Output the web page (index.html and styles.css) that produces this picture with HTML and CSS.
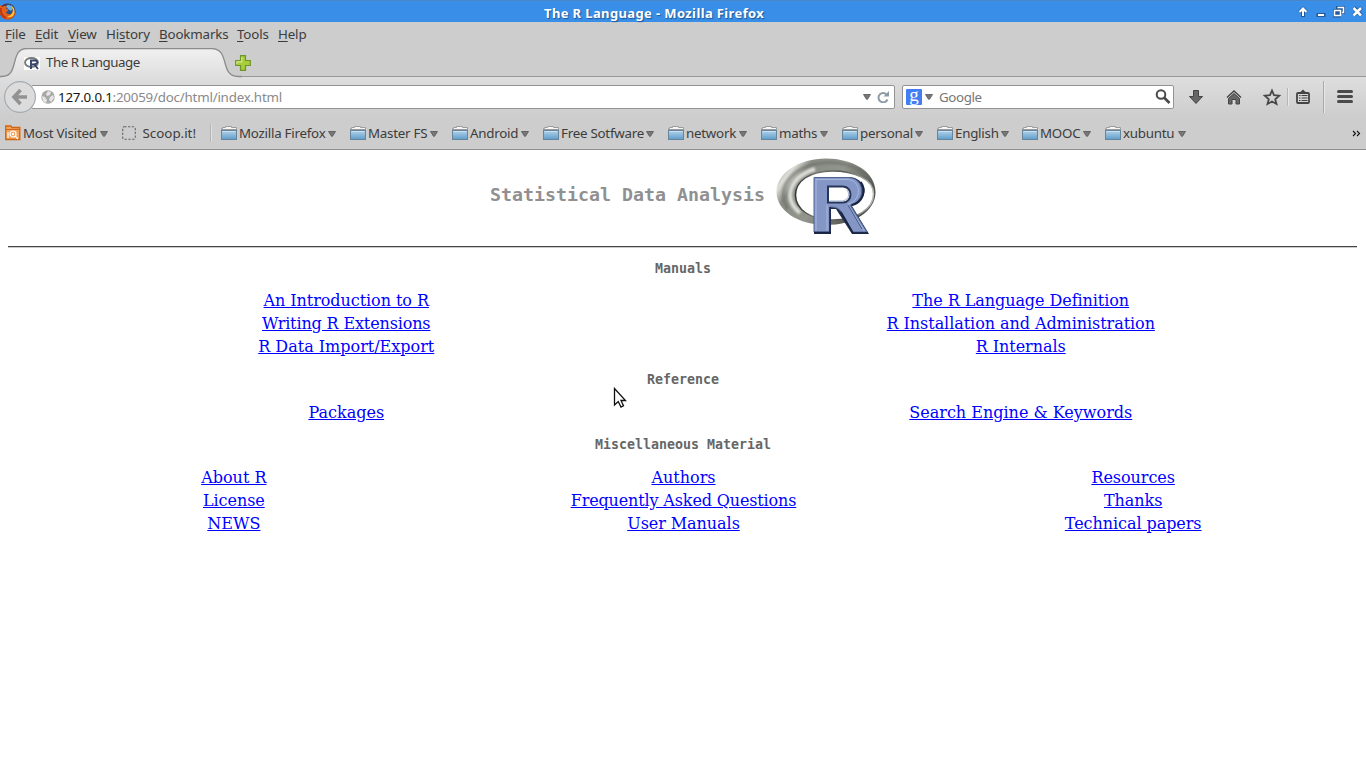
FILE: index.html
```html
<!DOCTYPE html>
<html lang="en">
<head>
<meta charset="utf-8">
<title>The R Language</title>
<link rel="stylesheet" href="styles.css">
</head>
<body>
<svg class="defs" width="0" height="0">
  <defs>
    <linearGradient id="folderFill" x1="0" y1="0" x2="0" y2="1"><stop offset="0" stop-color="#b4d4ea"/><stop offset="1" stop-color="#5e9cca"/></linearGradient>
    <symbol id="folder" viewBox="0 0 16 15">
      <path d="M.5 13.500V2.500H1.500V1.500H4.500V.5H10.500V1.500H15.500V13.500Z" fill="#f6f6f6" stroke="#9a9da0"/>
      <path d="M1 3.500H15" stroke="#999"/>
      <rect x=".5" y="4.500" width="15" height="9" fill="url(#folderFill)" stroke="#66849c"/>
      <path d="M1.500 5.500H14.500" stroke="#c8e0f0"/>
    </symbol>
    <symbol id="arrow" viewBox="0 0 8 6"><path d="M.5 .5H7.500L4.500 5.300H3.500Z" fill="#777" stroke="#555" stroke-width=".8"/></symbol>
    <linearGradient id="ring" x1="0" y1="0" x2="1" y2=".5"><stop offset="0" stop-color="#777a73"/><stop offset=".08" stop-color="#a4a79f"/><stop offset=".19" stop-color="#deded9"/><stop offset=".3" stop-color="#8a8d85"/><stop offset=".6" stop-color="#92958c"/><stop offset="1" stop-color="#4e514c"/></linearGradient>
    <linearGradient id="ringInner" x1="0" y1="0" x2="1" y2="0"><stop offset="0" stop-color="#31332f"/><stop offset=".25" stop-color="#73766f"/><stop offset=".6" stop-color="#555851"/><stop offset="1" stop-color="#b8bab5"/></linearGradient>
    <filter id="soft" x="-10%" y="-10%" width="120%" height="120%"><feGaussianBlur stdDeviation="1.300"/></filter>
    <symbol id="rlogo" viewBox="0 0 100 76">
      <path fill-rule="evenodd" fill="url(#ring)" d="M50 .5C77 .5 99.500 14 99.500 34S77 67 50 67S.5 53 .5 34S23 .5 50 .5ZM56 13C34 13 19.500 23 19.500 37S34 62 57 62S97.500 51 97.500 36S78 13 56 13Z"/>
      <path d="M12 51C-1 33 13 9 46 5C64 3 80 8 89 16" fill="none" stroke="#62655e" stroke-width="3" opacity=".5" filter="url(#soft)"/>
      <path d="M24 55C5 39 16 18 39 11" fill="none" stroke="#f8f8f3" stroke-width="4" opacity=".75" filter="url(#soft)"/>
      <path d="M56 13C34 13 19.500 23 19.500 37S34 62 57 62S97.500 51 97.500 36S78 13 56 13Z" fill="none" stroke="url(#ringInner)" stroke-width="1.500"/>
      <path fill="#202c4e" d="M38 19H72C93 19 93 45 76 48L93 76H76L60 51H55V76H38Z"/>
      <path fill="#8396c6" stroke="#536692" stroke-width="1" d="M38 19.500H72C89 19.500 90 43 76 46C73 47 76 49 78 53L91 74H77L66 55C63 50 60 49 54 49V74H38Z"/>
      <path d="M40 73V21.500H71C86 21.500 86 43 72 46L74 50L88 72.500M51 72.500V46.500" fill="none" stroke="#a9b8dc" stroke-width="1"/>
      <path d="M72 47L86 71" fill="none" stroke="#465883" stroke-width="1"/>
      <path d="M54 49V74.500H38M91.500 75H77L65 54M85 24C92 34 86 43 76 47" fill="none" stroke="#172341" stroke-width="1.500"/>
      <path d="M52 28.500H67C77 29 77 44 67 44.500H52Z" fill="#fff" stroke="#273658" stroke-width="2"/>
      <path d="M53.500 43H67C73 41 74 36 71 32" fill="none" stroke="#a5b2d2" stroke-width="1"/>
    </symbol>
  </defs>
</svg>

<div class="titlebar">
  <svg class="fox" width="17" height="18" viewBox="0 0 17 18">
    <circle cx="7.500" cy="9.500" r="8" fill="#7e2215"/><circle cx="8.500" cy="8.500" r="6.500" fill="#255391"/>
    <path d="M6 4Q10 1 13 6L11 9L8 7Z" fill="#67b3e5"/>
    <path d="M0 3L2 5Q4 3 7 5L6 7Q9 7 8 9L6 10Q7 13 11 12Q14 10 12 5Q18 12 12 16Q5 20 1 14Q-1 10 0 3Z" fill="#e1601c"/>
    <path d="M11 3Q17 8 13 14Q10 16 7 15Q13 13 13 8Z" fill="#f8c839"/>
    <path d="M1 6Q0 13 6 16" fill="none" stroke="#b72d16" stroke-width="1.500"/>
  </svg>
  <span class="title">The R Language - Mozilla Firefox</span>
  <svg class="winbtns" width="66" height="16" viewBox="0 0 66 16">
    <g fill="none" stroke="#245a9b" stroke-width="4" stroke-linecap="square"><path d="M5 11V6M3 7L5 5L7 7M20.500 11H25.500M37 7H41V11.500H37ZM40 4H45V8M57 5L62 10M62 5L57 10"/></g>
    <g fill="none" stroke="#fff" stroke-width="2"><path d="M5 12V5M1.500 8L5 4.500L8.500 8M20 11H26"/><path d="M36.500 6.500H42.500V11.500H36.500Z M39.500 3.500H45.500V8.500H44" stroke-width="1.500"/><path d="M55.500 4L63 11.500M63 4L55.500 11.500" stroke-width="2.500"/></g>
  </svg>
</div>

<div class="menubar">
  <span class="m1"><u>F</u>ile</span><span class="m2"><u>E</u>dit</span><span class="m3"><u>V</u>iew</span><span class="m4">Hi<u>s</u>tory</span><span class="m5"><u>B</u>ookmarks</span><span class="m6"><u>T</u>ools</span><span><u>H</u>elp</span>
</div>

<div class="tabstrip">
  <div class="tab">
    <svg class="tabshape" width="242" height="30" viewBox="0 0 242 30">
      <defs><linearGradient id="tabFill" x1="0" y1="0" x2="0" y2="1"><stop offset="0" stop-color="#f0f0f0"/><stop offset="1" stop-color="#dedede"/></linearGradient></defs>
      <path d="M0 28.500H2C20 28.500 9 .5 27 .5H211C231 .5 219 28.500 238 28.500H242V30H0Z" fill="url(#tabFill)"/>
      <path d="M0 28.500H2C20 28.500 9 .5 27 .5H211C231 .5 219 28.500 238 28.500H242" fill="none" stroke="#8c8c8c" stroke-width="1.300"/>
    </svg>
    <svg class="tabicon" width="16" height="13" viewBox="0 0 16 13"><rect width="16" height="13" fill="#fff"/><ellipse cx="7.500" cy="5.500" rx="6.500" ry="4.500" fill="none" stroke="#777b78" stroke-width="1.800"/><path d="M7 12V3.500H11.500Q14 4 13 6Q12 7.500 8 7.500M10.500 7.500L14 12" fill="none" stroke="#33416d" stroke-width="1.900"/></svg>
    <span class="tabtitle">The R Language</span>
  </div>
  <svg class="plus" width="16" height="16" viewBox="0 0 16 16"><path d="M5.500 .7H10.500V5.500H15.300V10.500H10.500V15.300H5.500V10.500H.7V5.500H5.500Z" fill="#a9cc3b" stroke="#6c962a" stroke-width="1.200"/><path d="M6.800 2V6.800H2V9" fill="none" stroke="#d3e58c" stroke-width="1.200"/></svg>
</div>

<div class="navbar">
  <svg class="back" width="32" height="32" viewBox="0 0 32 32"><circle cx="16" cy="16" r="15.400" fill="#dcdcdc" stroke="#a3abb1" stroke-width="1.200"/><path d="M16.500 9L10 16L16.500 23M10 16H23" fill="none" stroke="#929292" stroke-width="3.600"/></svg>
  <div class="urlbox">
    <svg width="14" height="14" viewBox="0 0 14 14"><circle cx="7" cy="7" r="6.700" fill="#a8a8a8"/><path d="M7 1L10 2L9 5L6 6L5 4ZM1 6L4 7L6 10L5 13L2 11ZM9 7L12 5L13 8L10 12L8 10Z" fill="#e5e5e5"/></svg>
    <span class="url"><b>127.0.0.1</b>:20059/doc/html/index.html</span>
    <svg class="urlarrow" width="8" height="6"><use href="#arrow"/></svg>
    <svg class="reload" width="12" height="12" viewBox="0 0 12 12"><path d="M10 3.800A4.700 4.700 0 1 0 10.500 8.500" fill="none" stroke="#8e9ba7" stroke-width="2"/><path d="M12 0V5.500H6.500Z" fill="#8e9ba7"/></svg>
  </div>
  <div class="searchbox">
    <span class="google">g</span>
    <svg class="sarrow" width="8" height="6"><use href="#arrow"/></svg>
    <span class="hint">Google</span>
    <svg class="lens" width="16" height="16" viewBox="0 0 16 16"><circle cx="6" cy="5.500" r="4.300" fill="none" stroke="#4a4a4a" stroke-width="2"/><path d="M9 8.500L14.500 14" stroke="#4a4a4a" stroke-width="2.600"/></svg>
  </div>
  <svg class="tools" width="180" height="32" viewBox="0 0 180 32">
    <g fill="#666" stroke="#444" stroke-width="1"><path d="M10.500 9.500H15.500V15.500H19.500L13 22.500L6.500 15.500H10.500Z"/><path d="M45.500 17.500L51 12.500L56.500 17.500V23H53V18.500H49V23H45.500Z"/></g>
    <path d="M44 16.500L51 10L58 16.500" fill="none" stroke="#444" stroke-width="1.500"/>
    <path d="M89 9.500L91 14.200L96.200 14.700L92.200 18.200L93.500 23L89 20.500L84.500 23L85.800 18.200L81.800 14.700L87 14.200Z" fill="none" stroke="#484848" stroke-width="1.800"/>
    <path d="M104.500 7V25" stroke="#b4b8bc"/><path d="M105.500 7V25" stroke="#e7e7e7"/>
    <rect x="114" y="12" width="12" height="10" rx="1" fill="none" stroke="#444" stroke-width="1.800"/><path d="M116.500 12L120 8.500L123.500 12Z" fill="#444"/><path d="M116 14.500H117.500M118.500 14.500H124.500M116 17H117.500M118.500 17H124.500M116 19.500H117.500M118.500 19.500H124.500" stroke="#444" stroke-width="1.200"/>
    <path d="M140.500 0V32" stroke="#a4adb5"/><path d="M141.500 0V32" stroke="#e5e5e5"/>
    <path d="M155.500 10.500H168.500M155.500 15.500H168.500M155.500 20.500H168.500" stroke="#4a4a4a" stroke-width="3" stroke-linecap="round"/>
  </svg>
</div>

<div class="bookmarks">
  <div class="bm visited"><svg width="16" height="16" viewBox="0 0 16 16"><path d="M.7 14.500V1H6L7 2.500H14.800V14.500Z" fill="#f3a35b" stroke="#cf6613" stroke-width="1.300"/><path d="M1 4.500H15" stroke="#cf6613"/><circle cx="8" cy="9" r="3" fill="none" stroke="#fff" stroke-width="1.200"/><circle cx="8" cy="9" r="1.200" fill="#fff"/><path d="M10 11L13 14M3 7V13" stroke="#fff" stroke-width="1.200"/></svg><span>Most Visited</span><svg class="dd" width="8" height="6"><use href="#arrow"/></svg></div>
  <div class="bm scoop"><svg width="14" height="14" viewBox="0 0 14 14"><rect x=".7" y=".7" width="12.600" height="12.600" rx="1.500" fill="none" stroke="#666" stroke-width="1.100" stroke-dasharray="2.300 1.500"/></svg><span>Scoop.it!</span></div>
  <div class="sep"></div>
  <div class="bm w1"><svg width="16" height="15"><use href="#folder"/></svg><span>Mozilla Firefox</span><svg class="dd" width="8" height="6"><use href="#arrow"/></svg></div>
  <div class="bm w2"><svg width="16" height="15"><use href="#folder"/></svg><span>Master FS</span><svg class="dd" width="8" height="6"><use href="#arrow"/></svg></div>
  <div class="bm w3"><svg width="16" height="15"><use href="#folder"/></svg><span>Android</span><svg class="dd" width="8" height="6"><use href="#arrow"/></svg></div>
  <div class="bm w4"><svg width="16" height="15"><use href="#folder"/></svg><span>Free Sotfware</span><svg class="dd" width="8" height="6"><use href="#arrow"/></svg></div>
  <div class="bm w5"><svg width="16" height="15"><use href="#folder"/></svg><span>network</span><svg class="dd" width="8" height="6"><use href="#arrow"/></svg></div>
  <div class="bm w6"><svg width="16" height="15"><use href="#folder"/></svg><span>maths</span><svg class="dd" width="8" height="6"><use href="#arrow"/></svg></div>
  <div class="bm w7"><svg width="16" height="15"><use href="#folder"/></svg><span>personal</span><svg class="dd" width="8" height="6"><use href="#arrow"/></svg></div>
  <div class="bm w8"><svg width="16" height="15"><use href="#folder"/></svg><span>English</span><svg class="dd" width="8" height="6"><use href="#arrow"/></svg></div>
  <div class="bm w9"><svg width="16" height="15"><use href="#folder"/></svg><span>MOOC</span><svg class="dd" width="8" height="6"><use href="#arrow"/></svg></div>
  <div class="bm w10"><svg width="16" height="15"><use href="#folder"/></svg><span>xubuntu</span><svg class="dd" width="8" height="6"><use href="#arrow"/></svg></div>
  <svg class="more" width="9" height="7" viewBox="0 0 9 7"><path d="M1 1L3.500 3.500L1 6M5 1L7.500 3.500L5 6" fill="none" stroke="#111" stroke-width="1.100"/></svg>
</div>

<main class="page">
  <h1><span>Statistical Data Analysis</span><svg width="100" height="76"><use href="#rlogo"/></svg></h1>
  <h3 class="manuals">Manuals</h3>
  <div class="links two">
    <a href="#">An Introduction to R</a><a href="#">The R Language Definition</a>
    <a class="tight" href="#">Writing R Extensions</a><a href="#">R Installation and Administration</a>
    <a class="plain" href="#">R Data Import/Export</a><a href="#">R Internals</a>
  </div>
  <h3 class="reference">Reference</h3>
  <div class="links two lower"><a class="plain" href="#">Packages</a><a class="plain" href="#">Search Engine &amp; Keywords</a></div>
  <h3 class="misc">Miscellaneous Material</h3>
  <div class="links three lower">
    <a class="plain" href="#">About R</a><a class="plain" href="#">Authors</a><a href="#">Resources</a>
    <a href="#">License</a><a class="tight" href="#">Frequently Asked Questions</a><a href="#">Thanks</a>
    <a class="plain" href="#">NEWS</a><a href="#">User Manuals</a><a href="#">Technical papers</a>
  </div>
</main>
<svg class="cursor" width="14" height="22" viewBox="0 0 14 22"><path d="M1.500 1.500V18L5.200 14.500L8 20L10.500 18.700L8 13.500H12.500Z" fill="#fff" stroke="#111" stroke-width="1.300"/></svg>
</body>
</html>
```

FILE: styles.css
```css
* { box-sizing: border-box; }
body { margin: 0; height: 768px; overflow: hidden; background: #fff; color: #3c3c3c; font: 13.33px/18px "Noto Sans", sans-serif; }
svg { display: block; flex: none; }
.defs { position: absolute; }

.titlebar { height: 22px; background: #398ee7; border-top: 1px solid #4a86c8; display: flex; align-items: center; position: relative; }
.fox { align-self: flex-start; margin-top: 1px; }
.title { width: 223px; margin-left: 527px; color: #fff; font: bold 13px/18px "Noto Sans", sans-serif; letter-spacing: .38px; white-space: nowrap; text-shadow: 1px 1px 1px #1d5596; padding-top: 2px; }
.winbtns { margin-left: auto; margin-right: 2px; margin-top: 1px; }

.menubar { height: 26px; background: #cdcdcd; display: flex; padding: 3px 0 0 5px; letter-spacing: -.15px; }
.menubar span { white-space: nowrap; }
.menubar u { text-underline-offset: 2px; }
.m1 { width: 30px; } .m2 { width: 33px; } .m3 { width: 38px; } .m4 { width: 53px; } .m5 { width: 78px; } .m6 { width: 41px; }

.tabstrip { height: 29px; background: #cdcdcd; display: flex; box-shadow: inset 0 -1px #989898; }
.tab { width: 235px; height: 29px; position: relative; display: flex; align-items: flex-start; padding: 9px 0 0 24px; }
.tabshape { position: absolute; left: 0; top: 0; }
.tabicon { position: relative; }
.tabtitle { position: relative; margin: -4px 0 0 6px; white-space: nowrap; letter-spacing: -.5px; }
.plus { position: relative; margin-top: 7px; }

.navbar { height: 40px; background: linear-gradient(#dedede, #cdcdcd); display: flex; align-items: center; padding-left: 4px; }
.back { position: relative; z-index: 1; }
.urlbox, .searchbox { height: 24px; background: #fff; border: 1px solid #939393; border-radius: 2px; display: flex; align-items: center; }
.urlbox { width: 864px; margin-left: -5px; padding-left: 9px; }
.url { margin-left: 3px; color: #8a8a8a; letter-spacing: -.21px; }
.url b { font-weight: 400; color: #151515; }
.urlarrow { margin-left: auto; margin-right: 6px; }
.reload { margin-right: 5px; }
.searchbox { width: 272px; margin-left: 7px; padding-left: 3px; }
.google { width: 16px; height: 16px; border-radius: 1px; background: #427df2; color: #fff; font: 19px/12px "Liberation Serif", serif; text-align: center; }
.sarrow { margin-left: 3px; }
.hint { margin-left: 6px; color: #777; letter-spacing: -.4px; }
.lens { margin-left: auto; margin-right: 2px; }
.tools { margin-left: 9px; }

.bookmarks { height: 33px; background: #cdcdcd; border-bottom: 1px solid #8e8e8e; display: flex; align-items: center; gap: 14px; padding: 0 5px; }
.bm { display: flex; align-items: center; gap: 2px; white-space: nowrap; flex: none; letter-spacing: -.24px; }
.bm .dd { margin-left: auto; position: relative; top: 1px; }
.visited { width: 103px; }
.scoop { width: 74px; gap: 5px; justify-content: space-between; letter-spacing: 0; }
.sep { width: 1px; height: 18px; background: #b4b4b4; margin-right: -4px; box-shadow: 1px 0 #e0e0e0; }
.w1 { width: 115px; } .w2 { width: 88px; } .w3 { width: 77px; } .w4 { width: 111px; } .w5 { width: 79px; }
.w6 { width: 67px; } .w7 { width: 81px; } .w8 { width: 71px; } .w9 { width: 69px; } .w10 { width: 81px; }
.more { margin-left: auto; }

.page { padding: 0 9px 0 8px; }
h1, h3 { margin: 0; font-family: "DejaVu Sans Mono", monospace; font-weight: bold; text-align: center; }
h1 { height: 98px; padding: 8px 0 0 1px; display: flex; justify-content: center; background: linear-gradient(#444, #444) 0 96px / 100% 1px no-repeat, linear-gradient(#ccc, #ccc) 0 97px / 100% 1px no-repeat; color: #909090; font-size: 18.27px; line-height: 74px; gap: 11px; white-space: nowrap; }
h3 { padding-left: 1px; font-size: 13.29px; line-height: 16px; color: #666; }
.manuals { margin-top: 13px; }
.reference { margin-top: 14px; }
.misc { margin-top: 13px; }
.links { display: grid; grid-auto-rows: 23px; justify-items: center; margin: 12px -1px 0 0; padding-left: 1px; font: 16px/23px "DejaVu Serif", serif; letter-spacing: -.06px; }
.lower { margin-top: 13px; }
.two { grid-template-columns: 1fr 1fr; }
.three { grid-template-columns: 1fr 1fr 1fr; }
.links a { color: #00f; white-space: nowrap; }
.links .tight { letter-spacing: -.14px; }
.links .plain { letter-spacing: 0; }
.cursor { position: absolute; left: 613px; top: 387px; }
```
